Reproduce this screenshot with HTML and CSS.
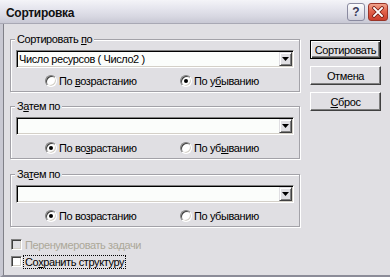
FILE: index.html
```html
<!DOCTYPE html>
<html lang="ru">
<head>
<meta charset="utf-8">
<title>Сортировка</title>
<link rel="stylesheet" href="styles.css">
</head>
<body>
<div class="window">
  <div class="titlebar">
    <span class="title">Сортировка</span>
    <div class="caption-btns">
      <span class="cbtn help">?</span>
      <span class="cbtn close"><svg width="12" height="12" viewBox="0 0 12 12"><path d="M2 2 L10 10 M10 2 L2 10" stroke="#7a1d12" stroke-width="3.4" stroke-linecap="square"/><path d="M2 2 L10 10 M10 2 L2 10" stroke="#ffffff" stroke-width="1.8" stroke-linecap="square"/></svg></span>
    </div>
  </div>
  <div class="client">
    <div class="left">
      <div class="group">
        <span class="legend">Сортировать <u>п</u>о</span>
        <div class="combo"><span class="combo-text">Число ресурсов ( Число2 )</span><span class="drop"><svg width="7" height="4" viewBox="0 0 7 4"><path d="M0 0H7L3.5 4Z" fill="#000"/></svg></span></div>
        <div class="radios">
          <span class="radio"><span class="rb"></span><span class="rl">По <u>в</u>озрастанию</span></span>
          <span class="radio"><span class="rb on"></span><span class="rl">По у<u>б</u>ыванию</span></span>
        </div>
      </div>
      <div class="group">
        <span class="legend">З<u>а</u>тем по</span>
        <div class="combo"><span class="combo-text"></span><span class="drop"><svg width="7" height="4" viewBox="0 0 7 4"><path d="M0 0H7L3.5 4Z" fill="#000"/></svg></span></div>
        <div class="radios">
          <span class="radio"><span class="rb on"></span><span class="rl">По во<u>з</u>растанию</span></span>
          <span class="radio"><span class="rb"></span><span class="rl">По уб<u>ы</u>ванию</span></span>
        </div>
      </div>
      <div class="group">
        <span class="legend">За<u>т</u>ем по</span>
        <div class="combo"><span class="combo-text"></span><span class="drop"><svg width="7" height="4" viewBox="0 0 7 4"><path d="M0 0H7L3.5 4Z" fill="#000"/></svg></span></div>
        <div class="radios">
          <span class="radio"><span class="rb on"></span><span class="rl">По возрастанию</span></span>
          <span class="radio"><span class="rb"></span><span class="rl">По убыванию</span></span>
        </div>
      </div>
      <div class="check disabled"><span class="cb"></span><span class="cl">Перенумеровать задачи</span></div>
      <div class="check"><span class="cb"></span><span class="cl focus">Со<u>х</u>ранить структуру</span></div>
    </div>
    <div class="buttons">
      <span class="btn default">Сортировать</span>
      <span class="btn">Отмена</span>
      <span class="btn"><span><u>С</u>брос</span></span>
    </div>
  </div>
</div>
</body>
</html>
```
FILE: styles.css
```css
html, body {
  margin: 0;
  padding: 0;
}
body {
  width: 390px;
  height: 277px;
  overflow: hidden;
  background: #e0dfe3;
  font-family: "Liberation Sans", Tahoma, sans-serif;
  font-size: 11px;
  letter-spacing: -0.4px;
  color: #000;
}
u { text-decoration: underline; text-underline-offset: 1px; }

.window {
  height: 277px;
  display: flex;
  flex-direction: column;
}
.titlebar {
  flex: none;
  height: 24px;
  display: flex;
  align-items: center;
  justify-content: space-between;
  padding: 0 2px 0 6px;
  background: linear-gradient(to bottom, #f4f4f8 0%, #e6e6ee 35%, #d8d8e2 70%, #c8c8d4 100%);
  border-bottom: 1px solid #a8a8b4;
  box-sizing: border-box;
}
.title {
  font-weight: bold;
  font-size: 12px;
  letter-spacing: -0.3px;
  color: #111;
  padding-top: 2px;
}
.caption-btns {
  display: flex;
  gap: 3px;
  padding-top: 1px;
}
.cbtn {
  width: 18px;
  height: 18px;
  box-sizing: border-box;
  border-radius: 3px;
  display: flex;
  align-items: center;
  justify-content: center;
}
.help {
  border: 1px solid #8a8aa0;
  background: linear-gradient(to bottom, #fdfdfd, #e4e4ec 60%, #cfcfda);
  color: #3a3a5a;
  font-weight: bold;
  font-size: 12px;
  letter-spacing: 0;
}
.close {
  width: 20px;
  border: 1px solid #9a3428;
  background: linear-gradient(to bottom, #f2a48e, #e2634c 45%, #cc3e2c);
}

.client {
  flex: 1;
  display: flex;
  gap: 9px;
  padding: 15px 0 0 7px;
  border-left: 3px solid #c8c8d2;
  border-bottom: 2px solid #8c8c98;
  box-shadow: inset 1px 0 0 #808088;
}
.left {
  width: 291px;
  display: flex;
  flex-direction: column;
}
.group {
  width: 290px;
  box-sizing: border-box;
  height: 53px;
  border: 1px solid #a3a2a8;
  box-shadow: inset 1px 1px 0 #fff, 1px 1px 0 #fff;
  margin-bottom: 14px;
}
.group:nth-child(3) { margin-top: 1px; margin-bottom: 10px; }
.legend {
  display: block;
  width: fit-content;
  height: 13px;
  line-height: 13px;
  margin: -7px 0 0 4px;
  padding: 0 2px;
  background: #e0dfe3;
}
.combo {
  margin: 4px 0 0 5px;
  width: 278px;
  height: 18px;
  box-sizing: border-box;
  border: 1px solid;
  border-color: #808080 #fff #fff #808080;
  box-shadow: inset 1px 1px 0 #000, inset -1px -1px 0 #d4d0c8;
  background: #fbfdfb;
  display: flex;
  align-items: center;
  padding: 1px;
}
.combo-text {
  flex: 1;
  padding-left: 1px;
  white-space: nowrap;
}
.drop {
  width: 13px;
  height: 14px;
  box-sizing: border-box;
  background: #e0dfe3;
  border: 1px solid;
  border-color: #e0dfe3 #404040 #404040 #e0dfe3;
  box-shadow: inset 1px 1px 0 #fff, inset -1px -1px 0 #808080;
  display: flex;
  align-items: center;
  justify-content: center;
}
.radios {
  display: grid;
  grid-template-columns: 135px auto;
  margin: 6px 0 0 34px;
  height: 13px;
}
.radio {
  display: flex;
  align-items: center;
  gap: 2px;
  white-space: nowrap;
}
.rb {
  width: 12px;
  height: 12px;
  box-sizing: border-box;
  border-radius: 50%;
  border: 1px solid;
  border-color: #808080 #fff #fff #808080;
  box-shadow: inset 1px 1px 0 #404040, inset -1px -1px 0 #d4d0c8;
  background: #fff;
  position: relative;
}
.rb.on::after {
  content: "";
  position: absolute;
  left: 3px;
  top: 3px;
  width: 4px;
  height: 4px;
  border-radius: 50%;
  background: #000;
}
.check {
  display: flex;
  align-items: center;
  height: 15px;
  margin-left: 1px;
  margin-bottom: 2px;
}
.cb {
  width: 11px;
  height: 11px;
  box-sizing: border-box;
  border: 1px solid;
  border-color: #808080 #fff #fff #808080;
  box-shadow: inset 1px 1px 0 #404040, inset -1px -1px 0 #d4d0c8;
  background: #fff;
}
.check.disabled .cb { background: #e0dfe3; }
.check.disabled .cl { color: #aca899; }
.cl {
  margin-left: 1px;
  padding: 0 1px;
  border: 1px dotted transparent;
  line-height: 12px;
}
.cl.focus { border-color: #000; }

.buttons {
  display: flex;
  flex-direction: column;
  gap: 7px;
  padding-top: 1px;
}
.btn {
  width: 71px;
  height: 19px;
  box-sizing: border-box;
  display: flex;
  align-items: center;
  justify-content: center;
  border: 1px solid;
  border-color: #fff #404040 #404040 #fff;
  box-shadow: inset -1px -1px 0 #808080;
}
.btn.default {
  border-color: #000;
  box-shadow: inset 1px 1px 0 #fff, inset -1px -1px 0 #404040, inset -2px -2px 0 #808080;
}
```
